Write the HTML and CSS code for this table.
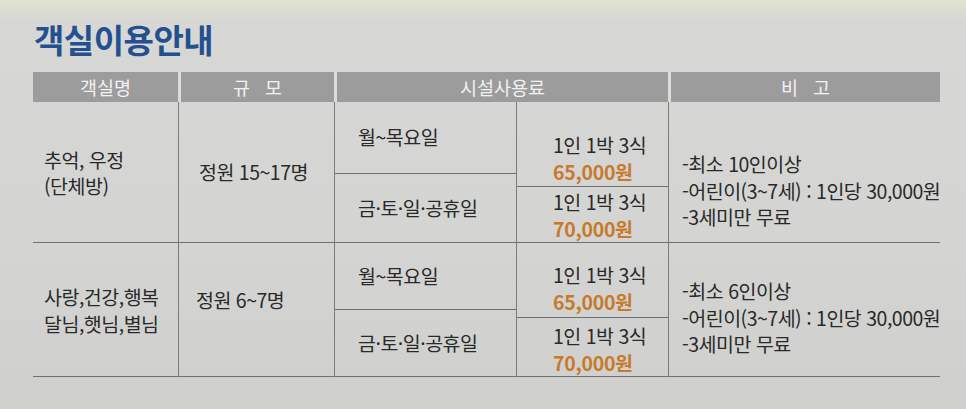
FILE: index.html
```html
<!DOCTYPE html>
<html lang="ko">
<head>
<meta charset="utf-8">
<link rel="stylesheet" href="styles.css">
</head>
<body>
<div class="page">
  <h1 class="title">객실이용안내</h1>
  <div class="table">
    <div class="th">객실명</div>
    <div class="th sep spaced">규 모</div>
    <div class="th sep span2">시설사용료</div>
    <div class="th sep spaced">비 고</div>

    <div class="cell name"><p>추억, 우정<br>(단체방)</p></div>
    <div class="cell size vl"><p>정원 15~17명</p></div>
    <div class="col vl">
      <div class="sub day r1a"><p>월~목요일</p></div>
      <div class="sub day r1b"><p>금·토·일·공휴일</p></div>
    </div>
    <div class="col vl">
      <div class="sub price p1a"><p>1인 1박 3식<br><span class="won">65,000원</span></p></div>
      <div class="sub price p1b"><p>1인 1박 3식<br><span class="won">70,000원</span></p></div>
    </div>
    <div class="cell note vl n1"><p>-최소 10인이상<br>-어린이(3~7세) : 1인당 30,000원<br>-3세미만 무료</p></div>

    <div class="cell name"><p>사랑,건강,행복<br>달님,햇님,별님</p></div>
    <div class="cell size vl s2"><p>정원 6~7명</p></div>
    <div class="col vl">
      <div class="sub day r2a"><p>월~목요일</p></div>
      <div class="sub day r2b"><p>금·토·일·공휴일</p></div>
    </div>
    <div class="col vl">
      <div class="sub price p2a"><p>1인 1박 3식<br><span class="won">65,000원</span></p></div>
      <div class="sub price p2b"><p>1인 1박 3식<br><span class="won">70,000원</span></p></div>
    </div>
    <div class="cell note vl n2"><p>-최소 6인이상<br>-어린이(3~7세) : 1인당 30,000원<br>-3세미만 무료</p></div>
  </div>
</div>
</body>
</html>
```

FILE: styles.css
```css
html, body {
  margin: 0;
  padding: 0;
}
body {
  width: 966px;
  height: 409px;
  overflow: hidden;
  background: linear-gradient(180deg, #e2e3d2 0px, #dadbd3 12px, #d7d8d5 22px, #d4d5d2 60%, #cfd0cd 100%);
  font-family: "Noto Sans CJK KR", "Noto Sans", sans-serif;
  color: #292929;
}
.page {
  padding: 18px 0 0 33px;
}
.title {
  margin: 0 0 11px 1px;
  font-size: 33px;
  line-height: 43px;
  font-weight: 700;
  color: #24508f;
  letter-spacing: -0.5px;
}
.table {
  display: grid;
  width: 907px;
  grid-template-columns: 145px 156px 182px 152px 272px;
  grid-template-rows: 30px 141px 134px;
}
.th {
  background: #9c9c9c;
  color: #f2f2f2;
  font-size: 18.5px;
  line-height: 30px;
  text-align: center;
}
.th.sep {
  border-left: 3px solid #dcdcd9;
}
.th.span2 {
  grid-column: span 2;
}
.th.spaced {
  word-spacing: 10px;
}
.cell, .sub {
  font-size: 19.5px;
  line-height: 26.5px;
  letter-spacing: -0.5px;
  display: flex;
  align-items: center;
  border-bottom: 1px solid #707070;
  white-space: nowrap;
}
.cell p, .sub p {
  margin: 0;
}
.vl {
  border-left: 1px solid #7c7c7c;
}
.col {
  display: flex;
  flex-direction: column;
}
.sub {
  box-sizing: border-box;
}
.r1a { height: 72px; }
.r1b { flex: 1; }
.r2a { height: 67px; }
.r2b { flex: 1; }
.price {
  align-items: flex-start;
  padding-left: 36px;
}
.p1a { height: 86px; padding-top: 30px; }
.p1b { flex: 1; padding-top: 2px; }
.p2a { height: 76px; padding-top: 19px; }
.p2b { flex: 1; padding-top: 5px; }
.name {
  padding-left: 11px;
  padding-top: 2px;
}
.size {
  padding-left: 20px;
}
.s2 {
  padding-left: 17px;
  padding-bottom: 18px;
}
.day {
  padding-left: 23px;
}
.won {
  color: #c77a2c;
  font-weight: 700;
  letter-spacing: -0.3px;
}
.note {
  align-items: flex-start;
  padding-left: 13px;
}
.n1 { padding-top: 49px; }
.n2 { padding-top: 35px; }
```
